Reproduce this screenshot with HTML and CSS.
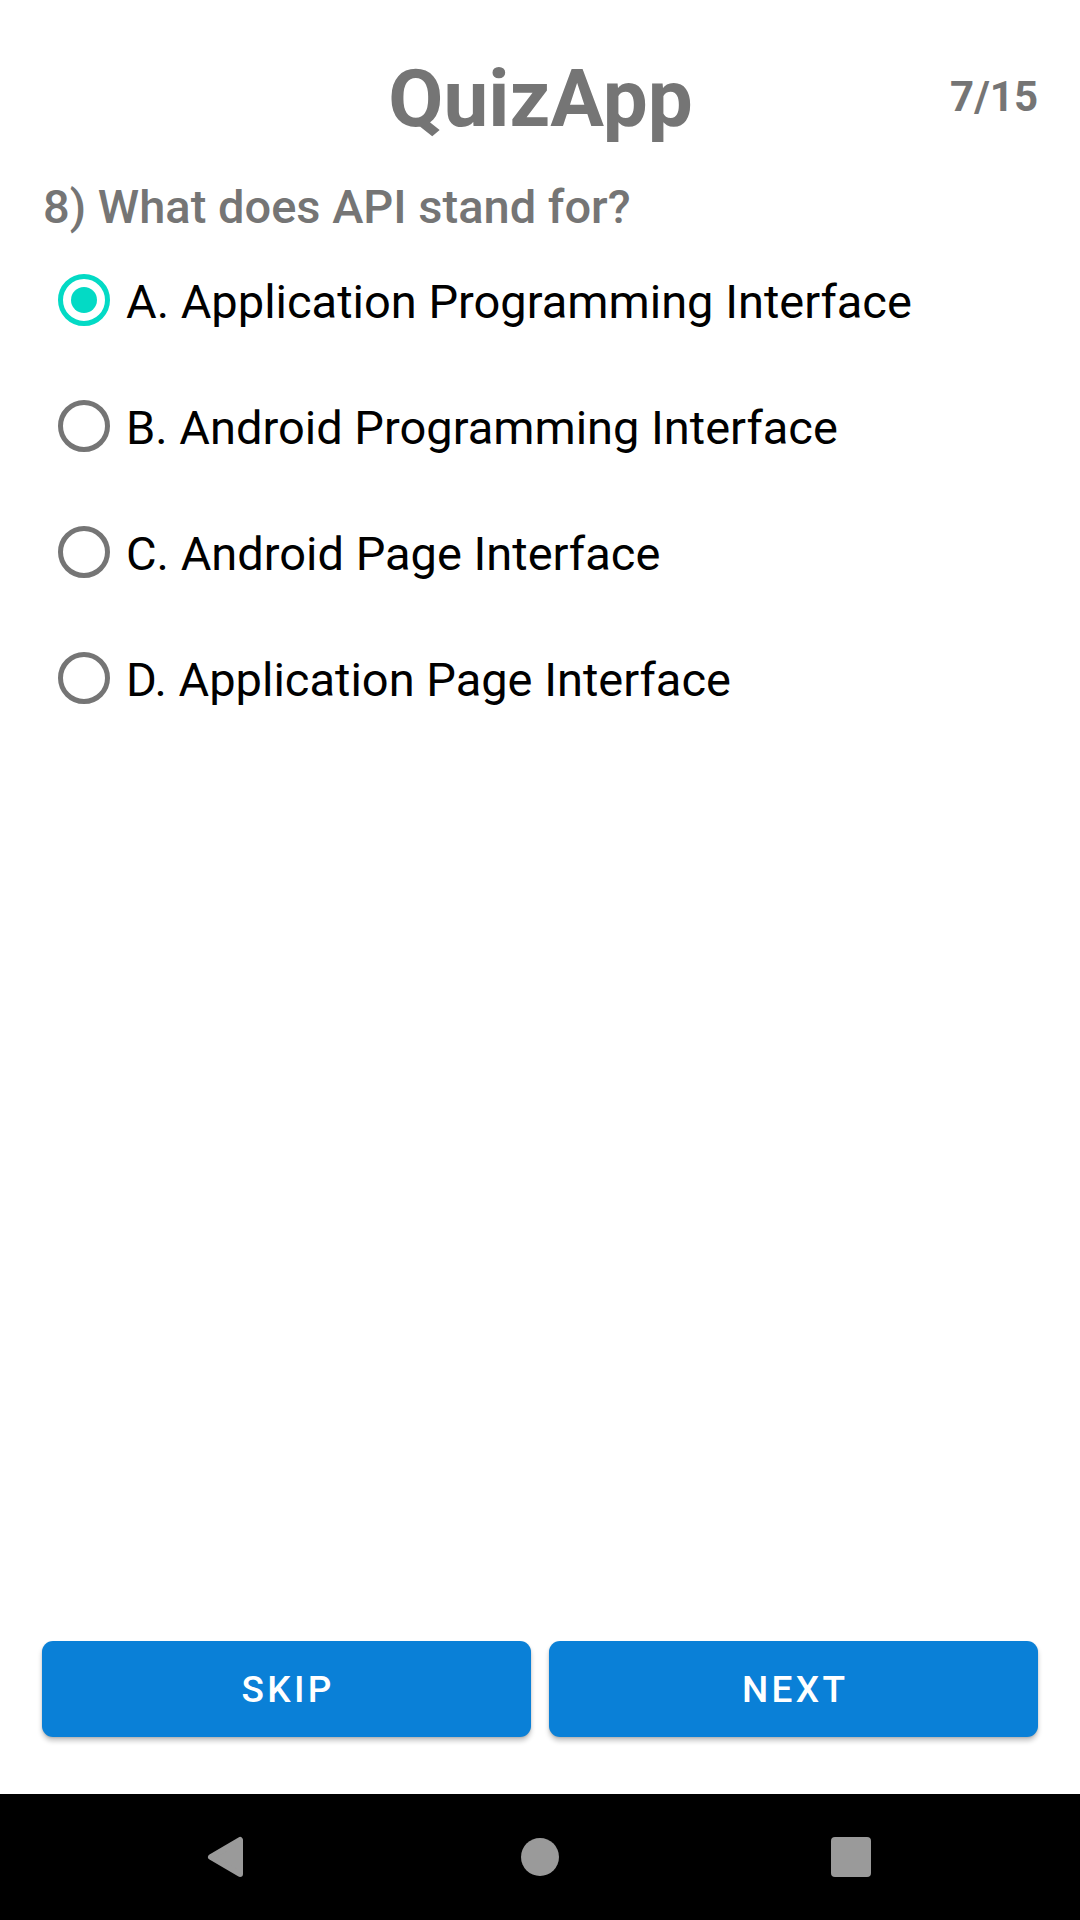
FILE: index.html
```html
<!DOCTYPE html>
<html lang="en">
<head>
<meta charset="utf-8">
<title>QuizApp</title>
<link rel="stylesheet" href="styles.css">
</head>
<body>
<div class="screen">
  <main class="content">
    <header class="header">
      <div class="spacer"></div>
      <h1 class="title">QuizApp</h1>
      <div class="counter">7/15</div>
    </header>
    <p class="question">8) What does API stand for?</p>
    <ul class="options">
      <li class="option"><span class="radio checked"></span><span class="label">A. Application Programming Interface</span></li>
      <li class="option"><span class="radio"></span><span class="label">B. Android Programming Interface</span></li>
      <li class="option"><span class="radio"></span><span class="label">C. Android Page Interface</span></li>
      <li class="option"><span class="radio"></span><span class="label">D. Application Page Interface</span></li>
    </ul>
  </main>
  <div class="actions">
    <button class="btn">SKIP</button>
    <button class="btn">NEXT</button>
  </div>
  <nav class="navbar">
    <svg class="navicons" width="1080" height="126" viewBox="0 0 1080 126">
      <polygon points="211,63 240,46 240,80" fill="#9a9a9a" stroke="#9a9a9a" stroke-width="6" stroke-linejoin="round"/>
      <circle cx="540" cy="63" r="19" fill="#9a9a9a"/>
      <rect x="831" y="43" width="40" height="40" rx="4" fill="#9a9a9a"/>
    </svg>
  </nav>
</div>
</body>
</html>
```
FILE: styles.css
```css
* { box-sizing: border-box; }
html, body { margin: 0; padding: 0; background: #fff; }
body { font-family: Roboto, "Noto Sans", "Liberation Sans", sans-serif; }
.screen {
  width: 1080px;
  height: 1920px;
  display: flex;
  flex-direction: column;
  overflow: hidden;
}
.content {
  flex: 1;
  padding: 52px 42px 0 43px;
}
.header {
  display: grid;
  grid-template-columns: 1fr auto 1fr;
  align-items: start;
}
.title {
  margin: 0;
  font-size: 80px;
  line-height: 94px;
  font-weight: 700;
  color: #757575;
}
.counter {
  justify-self: end;
  margin-top: 20px;
  font-size: 42px;
  line-height: 50px;
  font-weight: 700;
  color: #757575;
}
.question {
  margin: 33px 0 0 0;
  font-size: 47px;
  line-height: 56px;
  font-weight: 500;
  color: #757575;
}
.options {
  list-style: none;
  margin: 2px 0 0 0;
  padding: 0;
}
.option {
  height: 126px;
  display: flex;
  align-items: center;
  gap: 16px;
}
.radio {
  width: 52px;
  height: 52px;
  margin-left: 15px;
  border: 5px solid #757575;
  border-radius: 50%;
  display: flex;
  align-items: center;
  justify-content: center;
  flex-shrink: 0;
}
.radio.checked { border-color: #03dac5; }
.radio.checked::after {
  content: "";
  width: 26px;
  height: 26px;
  border-radius: 50%;
  background: #03dac5;
}
.label {
  font-size: 47px;
  line-height: 56px;
  color: #000;
  position: relative;
  top: 2px;
}
.actions {
  display: flex;
  gap: 18px;
  padding: 0 42px;
  margin-bottom: 57px;
}
.btn {
  flex: 1;
  height: 96px;
  border: none;
  border-radius: 11px;
  background: #0a80d7;
  color: #fff;
  font-family: Roboto, "Noto Sans", sans-serif;
  font-size: 37px;
  font-weight: 500;
  letter-spacing: 0.09em;
  padding: 0 0 0 0.09em;
  box-shadow: 0 4px 5px rgba(0,0,0,0.22), 0 1px 2px rgba(0,0,0,0.12);
}
.navbar {
  height: 126px;
  background: #000;
  flex-shrink: 0;
}
.navicons { display: block; }
```
